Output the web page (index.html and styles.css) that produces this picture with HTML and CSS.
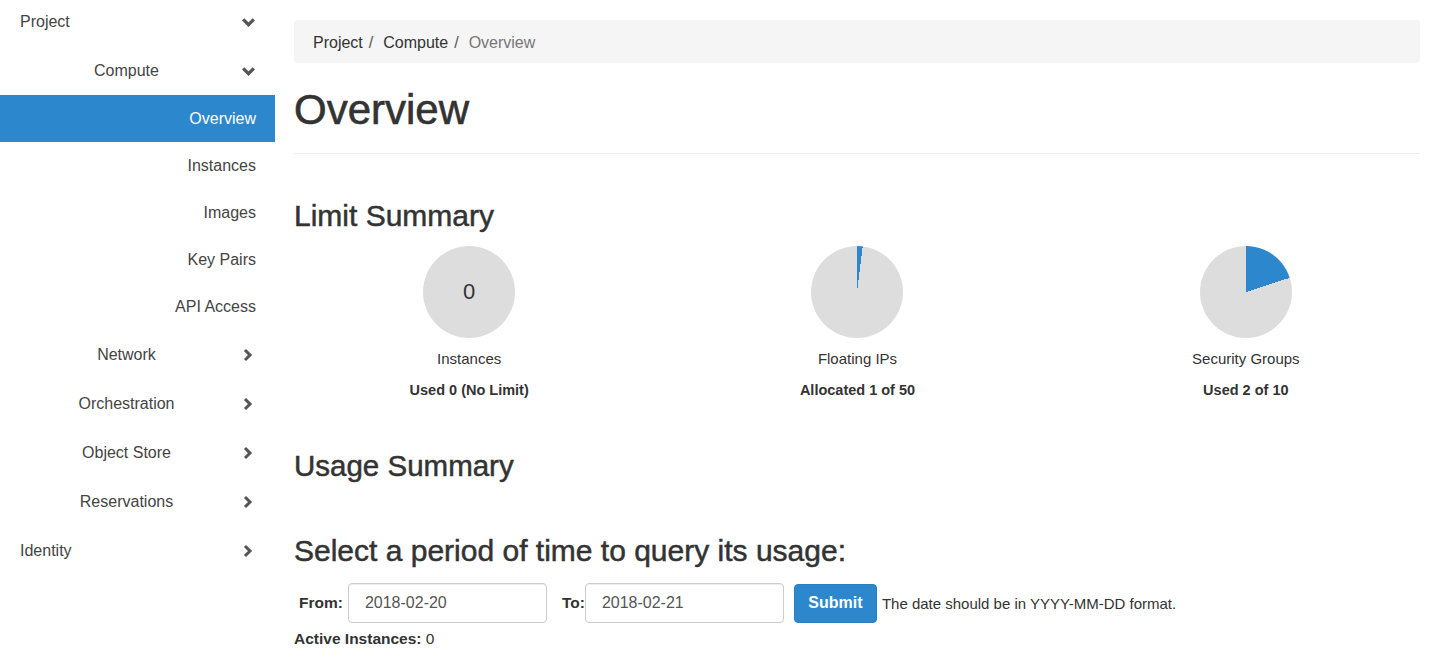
FILE: index.html
```html
<!DOCTYPE html>
<html lang="en">
<head>
<meta charset="utf-8">
<title>Overview</title>
<link rel="stylesheet" href="styles.css">
</head>
<body>
<div class="layout">
  <nav class="sidebar">
    <div class="nav-item lvl1"><span class="label">Project</span><svg class="chev" viewBox="0 0 14 10"><polyline points="2,2 7,7 12,2"/></svg></div>
    <div class="nav-item lvl2"><span class="label">Compute</span><svg class="chev" viewBox="0 0 14 10"><polyline points="2,2 7,7 12,2"/></svg></div>
    <div class="nav-item lvl3 active"><span class="label">Overview</span></div>
    <div class="nav-item lvl3"><span class="label">Instances</span></div>
    <div class="nav-item lvl3"><span class="label">Images</span></div>
    <div class="nav-item lvl3"><span class="label">Key Pairs</span></div>
    <div class="nav-item lvl3"><span class="label">API Access</span></div>
    <div class="nav-item lvl2"><span class="label">Network</span><svg class="chev right" viewBox="0 0 14 14"><polyline points="4,2 9,7 4,12"/></svg></div>
    <div class="nav-item lvl2"><span class="label">Orchestration</span><svg class="chev right" viewBox="0 0 14 14"><polyline points="4,2 9,7 4,12"/></svg></div>
    <div class="nav-item lvl2"><span class="label">Object Store</span><svg class="chev right" viewBox="0 0 14 14"><polyline points="4,2 9,7 4,12"/></svg></div>
    <div class="nav-item lvl2"><span class="label">Reservations</span><svg class="chev right" viewBox="0 0 14 14"><polyline points="4,2 9,7 4,12"/></svg></div>
    <div class="nav-item lvl1"><span class="label">Identity</span><svg class="chev right" viewBox="0 0 14 14"><polyline points="4,2 9,7 4,12"/></svg></div>
  </nav>
  <main class="main">
    <ol class="breadcrumb">
      <li class="crumb">Project</li>
      <li class="sep">/</li>
      <li class="crumb">Compute</li>
      <li class="sep">/</li>
      <li class="crumb current">Overview</li>
    </ol>
    <h1 class="page-title">Overview</h1>
    <hr class="divider">
    <h2 class="section-title limit">Limit Summary</h2>
    <div class="pies">
      <div class="pie-col">
        <div class="pie empty"><span class="pie-num">0</span></div>
        <div class="pie-label">Instances</div>
        <div class="pie-stat">Used 0 (No Limit)</div>
      </div>
      <div class="pie-col">
        <div class="pie fip"></div>
        <div class="pie-label">Floating IPs</div>
        <div class="pie-stat">Allocated 1 of 50</div>
      </div>
      <div class="pie-col">
        <div class="pie sg"></div>
        <div class="pie-label">Security Groups</div>
        <div class="pie-stat">Used 2 of 10</div>
      </div>
    </div>
    <h2 class="section-title usage">Usage Summary</h2>
    <h3 class="section-title query">Select a period of time to query its usage:</h3>
    <form class="date-form">
      <label class="form-label from">From:</label>
      <input class="date-input" type="text" value="2018-02-20">
      <label class="form-label to">To:</label>
      <input class="date-input" type="text" value="2018-02-21">
      <button class="btn-submit" type="button">Submit</button>
      <span class="help">The date should be in YYYY-MM-DD format.</span>
    </form>
    <p class="active-inst"><strong>Active Instances:</strong> 0</p>
  </main>
</div>
</body>
</html>
```
FILE: styles.css
```css
* { box-sizing: border-box; }
html, body { margin: 0; padding: 0; }
body {
  font-family: "Liberation Sans", Arial, sans-serif;
  color: #333;
  background: #fff;
  font-size: 14px;
  overflow: hidden;
}
.layout {
  display: flex;
  width: 1440px;
  height: 662px;
}
.sidebar {
  width: 275px;
  flex: 0 0 275px;
  display: flex;
  flex-direction: column;
}
.nav-item {
  display: flex;
  align-items: center;
  font-size: 16px;
  line-height: 20px;
  color: #444;
  padding: 15px 19px 14px 0;
}
.nav-item .label { flex: 1; }
.nav-item.lvl1:first-child { padding-top: 12px; padding-bottom: 14px; }
.nav-item.lvl1 .label { padding-left: 20px; }
.nav-item.lvl2 .label { text-align: center; padding-left: 12px; }
.nav-item.lvl3 { padding: 14px 19px 13px 0; }
.nav-item.lvl3 .label { text-align: right; }
.nav-item.active { background: #2d87cc; color: #fff; }
.chev {
  width: 15px;
  height: 11px;
  fill: none;
  stroke: #555;
  stroke-width: 3;
  stroke-linecap: butt;
  stroke-linejoin: miter;
}
.chev.right { width: 14px; height: 14px; margin-right: 1px; }

.main {
  flex: 1;
  padding: 20px 20px 0 19px;
  min-width: 0;
}
.breadcrumb {
  list-style: none;
  margin: 0;
  padding: 2px 18px 0 19px;
  height: 43px;
  background: #f5f5f5;
  border-radius: 4px;
  display: flex;
  align-items: center;
  font-size: 16px;
}
.crumb { color: #333; }
.crumb.current { color: #777; }
.sep { padding: 0 10px 0 6px; color: #555; }
.page-title {
  font-size: 42px;
  font-weight: normal;
  -webkit-text-stroke: 0.6px #333;
  line-height: 46px;
  margin: 24px 0 0;
  color: #333;
}
.divider {
  border: 0;
  border-top: 1px solid #eee;
  margin: 20px 0 0;
}
.section-title {
  font-size: 30px;
  font-weight: normal;
  -webkit-text-stroke: 0.5px #333;
  line-height: 33px;
  margin: 0;
}
.section-title.limit { margin-top: 45px; }
.section-title.usage { margin-top: 49px; font-size: 29.5px; }
.section-title.query { margin-top: 52px; }
.pies {
  display: grid;
  grid-template-columns: repeat(3, 1fr);
  margin: 14px -20px 0 -19px;
}
.pie-col {
  display: flex;
  flex-direction: column;
  align-items: center;
}
.pie {
  width: 92px;
  height: 92px;
  border-radius: 50%;
  background: #ddd;
  display: flex;
  align-items: center;
  justify-content: center;
}
.pie.fip { background: conic-gradient(#2d87cc 0 7.2deg, #ddd 7.2deg 360deg); }
.pie.sg { background: conic-gradient(#2d87cc 0 72deg, #ddd 72deg 360deg); }
.pie-num { font-size: 22px; color: #333; }
.pie-label {
  font-size: 15px;
  line-height: 20px;
  margin-top: 11px;
}
.pie-stat {
  font-size: 14.5px;
  font-weight: bold;
  line-height: 20px;
  margin-top: 11px;
}
.date-form {
  display: flex;
  align-items: center;
  margin-top: 16px;
  height: 40px;
}
.form-label {
  font-weight: bold;
  font-size: 15.5px;
}
.form-label.from { margin-left: 5px; margin-right: 5px; }
.form-label.to { margin-left: 15px; margin-right: 0; }
.date-input {
  width: 199px;
  height: 40px;
  border: 1px solid #ccc;
  border-radius: 4px;
  padding: 0 16px;
  font-family: "Liberation Sans", Arial, sans-serif;
  font-size: 16px;
  color: #555;
  box-shadow: inset 0 1px 1px rgba(0,0,0,0.075);
}
.btn-submit {
  margin-left: 10px;
  width: 83px;
  height: 39px;
  background: #2d87cc;
  border: 1px solid #2a7fc0;
  border-radius: 4px;
  color: #fff;
  font-family: "Liberation Sans", Arial, sans-serif;
  font-size: 16px;
  font-weight: bold;
  padding: 0;
}
.help {
  margin-left: 5px;
  font-size: 15px;
  color: #333;
}
.active-inst {
  margin: 6px 0 0;
  font-size: 15.5px;
  line-height: 20px;
}
```
